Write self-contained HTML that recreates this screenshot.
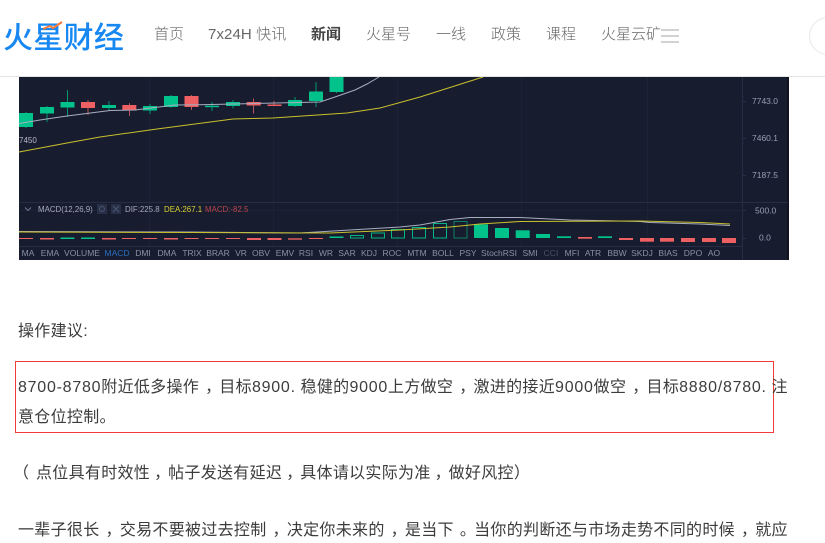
<!DOCTYPE html>
<html lang="zh-CN"><head><meta charset="utf-8"><title>火星财经</title>
<style>
html,body{margin:0;padding:0;background:#fff;width:825px;height:543px;overflow:hidden}
body{position:relative;font-family:"Liberation Sans","Noto Sans CJK SC",sans-serif}
.header{position:absolute;left:0;top:0;width:825px;height:76px;background:#fff;border-bottom:1px solid #e4e4e4;z-index:2}
.logo{position:absolute;left:3px;top:13px;font:500 30px/44px "Noto Sans CJK SC",sans-serif;color:#1787f2;white-space:nowrap;letter-spacing:.3px}
.nav{position:absolute;top:24px;font:300 15px/22px "Liberation Sans","Noto Sans CJK SC",sans-serif;color:#666;white-space:nowrap;overflow:hidden}
.bar{position:absolute;left:661px;width:18px;height:2px;background:#d2d2d2}
.search{position:absolute;left:809px;top:17px;width:60px;height:36px;border:1px solid #e8e8e8;border-radius:19px}
svg.chart{position:absolute;left:0;top:0;z-index:1;filter:blur(.25px)}
svg text{font-family:"Liberation Sans",sans-serif;font-size:8.5px}
.t{position:absolute;left:18px;font-size:16px;line-height:24px;color:#3c3c3c;white-space:nowrap;letter-spacing:.3px;font-family:"Liberation Sans","WenQuanYi Zen Hei","Noto Sans CJK SC",sans-serif}
.t b{font-weight:400;letter-spacing:.75px}
.t i{font-style:normal;display:inline-block;width:14.300px;padding-left:6px;letter-spacing:0;white-space:nowrap}
.t i.c{width:14px;padding-left:4px}
.box{position:absolute;left:15px;top:361px;width:757px;height:70px;border:1px solid #f23b3b}
</style></head><body>
<div class="header">
<div class="logo">火星财经</div>
<svg style="position:absolute;left:0;top:0" width="130" height="40"><path d="M43 29 L50 26 L53 28 L62 22" fill="none" stroke="#f47a3c" stroke-width="2"/></svg>
<div class="nav" style="left:154px">首页</div>
<div class="nav" style="left:208px;letter-spacing:.1px">7x24H 快讯</div>
<div class="nav" style="left:311px;font-weight:700;color:#444">新闻</div>
<div class="nav" style="left:366px">火星号</div>
<div class="nav" style="left:436px">一线</div>
<div class="nav" style="left:491px">政策</div>
<div class="nav" style="left:546px">课程</div>
<div class="nav" style="left:601px;width:60px">火星云矿</div>
<div class="bar" style="top:29px"></div><div class="bar" style="top:35px"></div><div class="bar" style="top:41px"></div>
<div class="search"></div>
</div>
<svg class="chart" width="825" height="270" viewBox="0 0 825 270">
<rect x="19" y="77" width="769" height="183" fill="#181c2f"/>
<rect x="787" y="77" width="2" height="183" fill="#10131f"/>
<g stroke="#1e2236" stroke-width="1"><path d="M149.500 77V246M273.500 77V246M397.500 77V246M521.500 77V246M647.500 77V246M19 210.500H742"/></g>
<g stroke="#282d45" stroke-width="1"><path d="M742.500 77V260M19 202.500H788M19 246.500H742M742 101.500h4M742 138.500h4M742 175.500h4M742 210.500h4M742 238.500h4"/></g>
<g stroke="#02966c" stroke-width="1">
<path d="M26 112V128M47 106V122M67.500 90V117M109 101V111M150 104V114M171 95V108M212 102V111M233 100V108.500M295 97V107M316 82V107M336.500 77V93"/></g>
<g stroke="#b85458" stroke-width="1"><path d="M88 100V115M129.500 103V116M191.500 95V110M253.500 98.500V113.500M274 101V106"/></g>
<g fill="#02c28b">
<rect x="19" y="113" width="14" height="14"/><rect x="40" y="107" width="14" height="6.500"/><rect x="60.500" y="102" width="14" height="5.500"/><rect x="102" y="105" width="14" height="3"/><rect x="143" y="106" width="14" height="4.500"/><rect x="164" y="96" width="14" height="11"/><rect x="205" y="105.700" width="14" height="1.500"/><rect x="226" y="102" width="14" height="4"/><rect x="288" y="100" width="14" height="6"/><rect x="309" y="91.500" width="14" height="9.500"/><rect x="329.500" y="77" width="14" height="15"/></g>
<g fill="#ee6062">
<rect x="81" y="102" width="14" height="6"/><rect x="122.300" y="105" width="14" height="5.500"/><rect x="184.500" y="96" width="14" height="11"/><rect x="246.700" y="102" width="14" height="3.500"/><rect x="267.500" y="104.500" width="14" height="1.500"/></g>
<path d="M19 123.500L40 120L67 116L110 110.500L135 110L175 105L200 104.700L320 102L335 97L355 90L367 84L379 77" fill="none" stroke="#a9adc0" stroke-width="1"/>
<path d="M19 152L67 143L100 137L157 129L233 119L273 118L347 113L380 108L420 97L483 77" fill="none" stroke="#c9c02c" stroke-width="1"/>
<g fill="#ee6062">
<rect x="19" y="238" width="14" height="1"/><rect x="40" y="238" width="14" height="1.500"/><rect x="102" y="238" width="14" height="1.500"/><rect x="122" y="238" width="14" height="1"/><rect x="143" y="238" width="14" height="1"/><rect x="164" y="238" width="14" height="1.500"/><rect x="184.500" y="238" width="14" height="1"/><rect x="205" y="238" width="14" height="1"/><rect x="226" y="238" width="14" height="1"/><rect x="247" y="238" width="14" height="2"/><rect x="267.500" y="238" width="14" height="2"/><rect x="288" y="238" width="14" height="2" fill="#a84c50"/><rect x="309" y="238" width="14" height="1"/>
<rect x="578" y="237" width="14" height="1.700"/><rect x="619" y="238" width="14" height="2"/><rect x="640" y="238" width="14" height="3.700"/><rect x="660" y="238" width="14" height="3.700"/><rect x="681" y="238" width="14" height="4"/><rect x="702" y="238" width="14" height="4"/><rect x="722" y="238" width="14" height="5"/></g>
<g fill="#02c28b">
<rect x="60.500" y="237.500" width="14" height="1.500"/><rect x="81" y="237.500" width="14" height="1.500"/><rect x="329.500" y="236.500" width="14" height="1.500"/>
<rect x="474" y="224.300" width="14" height="13.700"/><rect x="495" y="228" width="14" height="10"/><rect x="515.700" y="230.300" width="14" height="7.700"/><rect x="536" y="234" width="14" height="4"/><rect x="557" y="236.300" width="14" height="1.700"/><rect x="598" y="236.300" width="14" height="1.700"/></g>
<g fill="none" stroke="#02b582" stroke-width="1">
<rect x="350.500" y="235.500" width="13" height="2.500"/><rect x="371.500" y="233" width="13" height="5"/><rect x="391.500" y="229.500" width="13" height="8.500"/><rect x="412.500" y="227.500" width="13" height="10.500"/><rect x="433.500" y="223.500" width="13" height="14.500"/><rect x="454" y="221.500" width="13" height="16.500" stroke="#0c7f62"/></g>
<path d="M19 231.500L190 232L300 233L400 227L420 225L450 219.500L470 217.500L520 217.500L570 220L640 221.500L650 222.500L700 224L730 225.500" fill="none" stroke="#a9adc0" stroke-width="1"/>
<path d="M19 232L190 232.500L330 233L400 230L450 227L480 224L520 221.500L640 221L700 222.500L730 224" fill="none" stroke="#c9c02c" stroke-width="1"/>
<g fill="#9a9fb5" style="font-size:9px">
<text x="752" y="104">7743.0</text><text x="752" y="141">7460.1</text><text x="752" y="178">7187.5</text><text x="755" y="213.500">500.0</text><text x="759" y="240.500">0.0</text></g>
<text x="19" y="143" fill="#b5b8c8" style="font-size:8px">7450</text>
<path d="M25 207.500L28 210.500L31 207.500" fill="none" stroke="#707690" stroke-width="1"/>
<text x="38" y="212" fill="#a5a9bc" style="font-size:7.900px">MACD(12,26,9)</text>
<rect x="97" y="204" width="10" height="10" fill="#283048"/><rect x="111" y="204" width="10" height="10" fill="#283048"/>
<circle cx="102" cy="209" r="2.500" fill="none" stroke="#4a5470"/><path d="M113 206L119 212M119 206L113 212" stroke="#4a5470"/>
<text x="125" y="212" fill="#a5a9bc" style="font-size:7.900px">DIF:225.8</text><text x="164" y="212" fill="#d8d030" style="font-size:7.900px">DEA:267.1</text><text x="205" y="212" fill="#b8474c" style="font-size:7.900px">MACD:-82.5</text>
<g fill="#8a90a8" text-anchor="middle">
<text x="28" y="256">MA</text><text x="50" y="256">EMA</text><text x="82" y="256">VOLUME</text><text x="117" y="256" fill="#2a6fc0">MACD</text><text x="143" y="256">DMI</text><text x="167" y="256">DMA</text><text x="192" y="256">TRIX</text><text x="218" y="256">BRAR</text><text x="241" y="256">VR</text><text x="261" y="256">OBV</text><text x="285" y="256">EMV</text><text x="306" y="256">RSI</text><text x="326" y="256">WR</text><text x="347" y="256">SAR</text><text x="369" y="256">KDJ</text><text x="392" y="256">ROC</text><text x="417" y="256">MTM</text><text x="443" y="256">BOLL</text><text x="468" y="256">PSY</text><text x="499" y="256">StochRSI</text><text x="530" y="256">SMI</text><text x="551" y="256" fill="#4a5068">CCI</text><text x="572" y="256">MFI</text><text x="593" y="256">ATR</text><text x="617" y="256">BBW</text><text x="642" y="256">SKDJ</text><text x="668" y="256">BIAS</text><text x="693" y="256">DPO</text><text x="714" y="256">AO</text></g>
</svg>
<div class="t" style="top:320px">操作建议:</div>
<div class="box"></div>
<div class="t" style="top:376px"><b>8700-8780</b>附近低多操作<i>，</i>目标<b>8900.</b> 稳健的<b>9000</b>上方做空<i>，</i>激进的接近<b>9000</b>做空<i>，</i>目标<b>8880/8780.</b> 注</div>
<div class="t" style="top:406px">意仓位控制。</div>
<div class="t" style="top:462px"><i style="margin-left:-5px;padding-left:0;width:23px">（</i>点位具有时效性<i class="c">，</i>帖子发送有延迟<i class="c">，</i>具体请以实际为准<i class="c">，</i>做好风控<i style="padding-left:0">）</i></div>
<div class="t" style="top:519px">一辈子很长<i>，</i>交易不要被过去控制<i>，</i>决定你未来的<i>，</i>是当下<i>。</i>当你的判断还与市场走势不同的时候<i>，</i>就应</div>
</body></html>
